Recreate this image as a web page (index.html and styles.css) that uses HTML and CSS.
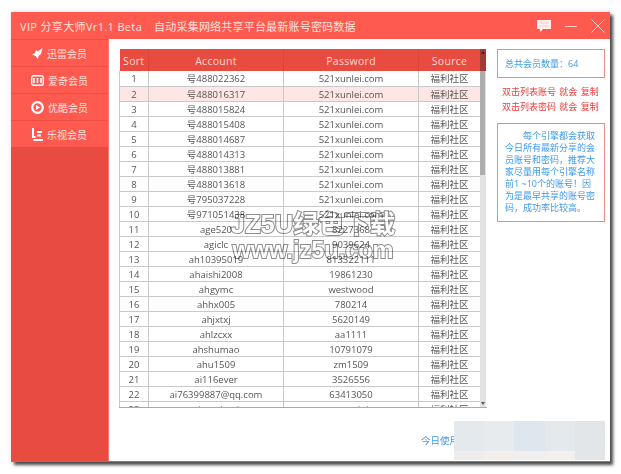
FILE: index.html
```html
<!DOCTYPE html>
<html lang="zh">
<head>
<meta charset="utf-8">
<title>VIP 分享大师</title>
<link rel="stylesheet" href="styles.css">
</head>
<body>
<div class="window">
  <header class="titlebar">
    <span class="app-name">VIP 分享大师Vr1.1 Beta</span>
    <span class="app-desc">自动采集网络共享平台最新账号密码数据</span>
    <div class="win-controls">
      <svg width="14" height="12" viewBox="0 0 14 12"><path d="M0 0h14v9H6l-3 3V9H0z" fill="#fff" opacity=".9"/><path d="M2 3h10M2 6h10" stroke="#ffb5ad" stroke-width=".6"/></svg>
      <svg width="12" height="12" viewBox="0 0 12 12"><path d="M0 6.500h12" stroke="#ffd0cb" stroke-width="1"/></svg>
      <svg width="14" height="14" viewBox="0 0 14 14"><path d="M.5.5l13 13M13.500.5l-13 13" stroke="#ffd0cb" stroke-width="1"/></svg>
    </div>
  </header>
  <div class="body">
    <nav class="sidebar">
      <a class="nav-item"><svg width="11" height="11" viewBox="0 0 11 11"><path d="M10.500 0L9 6 6.500 8 6 11 3.500 8 0 6.500 3 5 4 2 5.500 3.500z" fill="#fff"/></svg>迅雷会员</a>
      <a class="nav-item"><svg width="13" height="11" viewBox="0 0 13 11"><rect x=".7" y=".7" width="11.600" height="9.600" rx="2" fill="none" stroke="#fff" stroke-width="1.400"/><path d="M3 3v5M6.500 3v5M10 3v5" stroke="#fff" stroke-width="1.600"/></svg>爱奇会员</a>
      <a class="nav-item"><svg width="13" height="13" viewBox="0 0 13 13"><circle cx="6.500" cy="6.500" r="5.300" fill="none" stroke="#fff" stroke-width="2.200"/><path d="M5 4l4 2.500L5 9z" fill="#fff"/></svg>优酷会员</a>
      <a class="nav-item"><svg width="11" height="13" viewBox="0 0 11 13"><path d="M1 0v9h2.500M5 4h5M5 7.500h4M1.500 12H11" stroke="#fff" stroke-width="2" fill="none"/></svg>乐视会员</a>
    </nav>
    <main class="content">
      <section class="table-wrap">
        <table class="grid">
          <colgroup><col class="c-sort"><col class="c-acc"><col class="c-pass"><col class="c-src"></colgroup>
          <thead><tr><th>Sort</th><th>Account</th><th>Password</th><th>Source</th></tr></thead>
          <tbody>
            <tr><td>1</td><td>号488022362</td><td>521xunlei.com</td><td>福利社区</td></tr>
            <tr class="selected"><td>2</td><td>号488016317</td><td>521xunlei.com</td><td>福利社区</td></tr>
            <tr><td>3</td><td>号488015824</td><td>521xunlei.com</td><td>福利社区</td></tr>
            <tr><td>4</td><td>号488015408</td><td>521xunlei.com</td><td>福利社区</td></tr>
            <tr><td>5</td><td>号488014687</td><td>521xunlei.com</td><td>福利社区</td></tr>
            <tr><td>6</td><td>号488014313</td><td>521xunlei.com</td><td>福利社区</td></tr>
            <tr><td>7</td><td>号488013881</td><td>521xunlei.com</td><td>福利社区</td></tr>
            <tr><td>8</td><td>号488013618</td><td>521xunlei.com</td><td>福利社区</td></tr>
            <tr><td>9</td><td>号795037228</td><td>521xunlei.com</td><td>福利社区</td></tr>
            <tr><td>10</td><td>号971051438</td><td>521xunlei.com</td><td>福利社区</td></tr>
            <tr><td>11</td><td>age520</td><td>8227368</td><td>福利社区</td></tr>
            <tr><td>12</td><td>agiclc</td><td>9039624</td><td>福利社区</td></tr>
            <tr><td>13</td><td>ah10395019</td><td>813322111</td><td>福利社区</td></tr>
            <tr><td>14</td><td>ahaishi2008</td><td>19861230</td><td>福利社区</td></tr>
            <tr><td>15</td><td>ahgymc</td><td>westwood</td><td>福利社区</td></tr>
            <tr><td>16</td><td>ahhx005</td><td>780214</td><td>福利社区</td></tr>
            <tr><td>17</td><td>ahjxtxj</td><td>5620149</td><td>福利社区</td></tr>
            <tr><td>18</td><td>ahlzcxx</td><td>aa1111</td><td>福利社区</td></tr>
            <tr><td>19</td><td>ahshumao</td><td>10791079</td><td>福利社区</td></tr>
            <tr><td>20</td><td>ahu1509</td><td>zm1509</td><td>福利社区</td></tr>
            <tr><td>21</td><td>ai116ever</td><td>3526556</td><td>福利社区</td></tr>
            <tr><td>22</td><td>ai76399887@qq.com</td><td>63413050</td><td>福利社区</td></tr>
            <tr><td>23</td><td>aiqmeimei</td><td>wenqiqi</td><td>福利社区</td></tr>
          </tbody>
        </table>
        <div class="scrollbar"><span class="head-shade"></span><span class="thumb"></span><span class="arrow up"></span><span class="arrow down"></span></div>
      </section>
      <aside class="panel">
        <div class="box count">总共会员数量：64</div>
        <p class="hint">双击列表账号 就会 复制</p>
        <p class="hint">双击列表密码 就会 复制</p>
        <div class="box note"><p>每个引擎都会获取今日所有最新分享的会员账号和密码，推荐大家尽量用每个引擎名称前1 ~10个的账号！因为是最早共享的账号密码，成功率比较高。</p></div>
      </aside>
      <div class="footer-link">今日使用</div>
      <div class="mosaic"></div>
    </main>
  </div>
</div>
<div class="watermark"><div class="wm-1">JZ5U绿色下载</div><div class="wm-2">www.jz5u.com</div></div>
</body>
</html>
```

FILE: styles.css
```css
* { box-sizing: border-box; }
html, body { margin: 0; padding: 0; background: #fff; height: 100%; overflow: hidden; }
body {
  font-family: "Open Sans", "Noto Sans", "Noto Sans CJK SC", sans-serif;
  padding: 12px 0 0 11px;
  position: relative;
}
.window {
  width: 599px;
  height: 450px;
  background: #fff;
  display: flex;
  flex-direction: column;
  box-shadow: 3px 3px 3px rgba(30, 30, 30, .8), 0 0 6px rgba(0, 0, 0, .1);
  border-bottom: 1px solid #e8574c;
  filter: blur(.45px);
}
.titlebar {
  height: 27px;
  flex: none;
  background: #ff5a50;
  color: #ffe3df;
  display: flex;
  align-items: center;
  padding-left: 9px;
  font-size: 11px;
  letter-spacing: .35px;
}
.app-desc { margin-left: 12px; letter-spacing: .2px; }
.win-controls { margin-left: auto; display: flex; align-items: center; gap: 14px; padding-right: 5px; }
.body { flex: 1; display: flex; min-height: 0; }
.sidebar { width: 98px; flex: none; background: #e84c40; border-right: 1px solid #f47a70; }
.nav-item {
  height: 27px;
  display: flex;
  align-items: center;
  justify-content: center;
  gap: 4px;
  background: #ff5a50;
  border-top: 1px solid #ec5045;
  color: #ffe3df;
  font-size: 10px;
}
.content { flex: 1; position: relative; padding: 10px 5px 0 10px; display: flex; gap: 10px; align-items: flex-start; min-width: 0; }
.table-wrap { width: 368px; height: 359px; flex: none; overflow: hidden; position: relative; border-bottom: 1px solid #aaa; }
.grid { width: 361px; border-collapse: collapse; table-layout: fixed; font-size: 9.500px; color: #555; }
.c-sort { width: 29px; }
.c-acc { width: 135px; }
.c-pass { width: 135px; }
.c-src { width: 62px; }
.grid th {
  height: 22px;
  padding: 1px 0 0;
  background: #e84c40;
  color: #ffd8d3;
  font-weight: 400;
  font-size: 10.500px;
  letter-spacing: .3px;
  border-right: 1px solid #d9473c;
}
.grid td {
  height: 15px;
  padding: 1px 0 0;
  text-align: center;
  line-height: 13px;
  border: 1px solid #c9c9c9;
  border-top: 0;
  white-space: nowrap;
  overflow: hidden;
}
.grid td:last-child { border-right-color: #e0e0e0; }
.selected td { background: #fde6e3; }
.scrollbar {
  position: absolute;
  top: 0; right: 1px; bottom: 0;
  width: 6px;
  background: #e2e2e2;
}
.head-shade { position: absolute; top: 0; left: 0; right: 0; height: 22px; background: #a23b34; }
.thumb { position: absolute; top: 22px; left: 0; right: 1px; height: 104px; background: #acacac; }
.arrow { position: absolute; left: .5px; width: 0; height: 0; border-left: 2.500px solid transparent; border-right: 2.500px solid transparent; }
.arrow.up { top: 2px; border-bottom: 3px solid #4a2020; }
.arrow.down { bottom: 2px; border-top: 3px solid #555; }
.panel { width: 108px; flex: none; font-size: 9px; }
.box { border: 1px solid #ec8a83; color: #3f9bea; }
.count { height: 29px; display: flex; align-items: center; padding-left: 7px; }
.hint { margin: 0; height: 15px; line-height: 15px; color: #ee3a3a; padding-left: 5px; white-space: nowrap; word-spacing: 1px; }
.count + .hint { margin-top: 6px; }
.note { margin-top: 9px; height: 99px; padding: 6px 9px 0 7px; line-height: 12px; }
.note p { margin: 0; text-indent: 2em; }
.footer-link { position: absolute; left: 312px; top: 394px; font-size: 9.500px; color: #3f9bea; }
.mosaic {
  position: absolute;
  left: 345px; top: 382px;
  width: 151px; height: 39px;
  background:
    linear-gradient(90deg, #e4e9ed 0 20%, #e8ebed 20% 40%, #dfe7ee 40% 60%, #e4e9ed 60% 80%, #e2e6e8 80%) top / 100% 30px no-repeat,
    linear-gradient(90deg, #ededed 0 20%, #f2eeec 20% 40%, #f1eeee 40% 60%, #f2f0ef 60% 80%, #e2e6e8 80%);
}
.watermark {
  position: absolute;
  left: 218px; top: 210px;
  width: 190px;
  text-align: center;
  font-family: "Liberation Sans", "Noto Sans CJK SC", sans-serif;
  font-weight: 700;
  color: #fff;
  -webkit-text-stroke: 2px #8c8c8c;
  paint-order: stroke fill;
  filter: blur(.4px);
  mix-blend-mode: multiply;
}
.wm-1 { font-size: 25.500px; line-height: 28px; white-space: nowrap; }
.wm-2 { font-size: 23.500px; line-height: 24px; white-space: nowrap; }
```
